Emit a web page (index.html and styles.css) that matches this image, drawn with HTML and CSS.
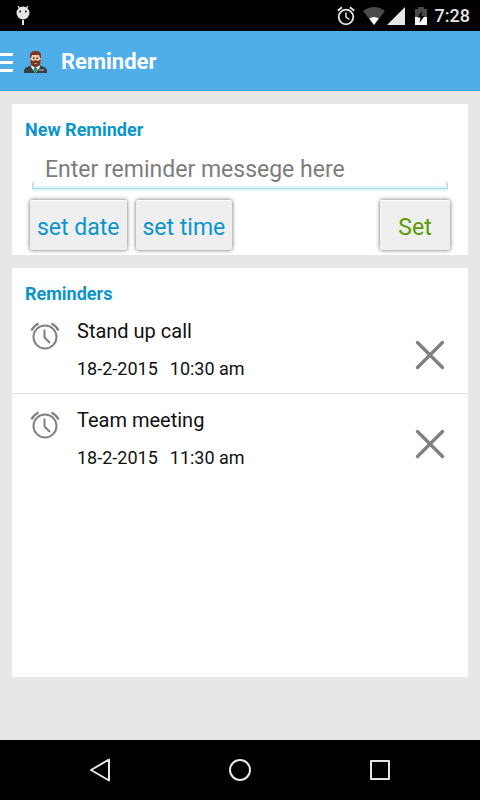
FILE: index.html
```html
<!DOCTYPE html>
<html lang="en">
<head>
    <meta charset="UTF-8">
    <meta name="viewport" content="width=device-width, initial-scale=1.0">
    <title>Reminder</title>
    <link rel="stylesheet" href="styles.css">
</head>
<body>
    <!-- Shared icons -->
    <svg class="icon-defs" aria-hidden="true">
        <symbol id="icon-alarm" viewBox="0 0 30 30">
            <g fill="none" stroke="currentColor">
                <circle cx="15" cy="16" r="11.500" stroke-width="2"/>
                <path d="M14.500 8.500v8l5.500 5.500" stroke-width="2"/>
                <path d="M1.500 9.500Q3.500 5 8.500 2.500M28.500 9.500Q26.500 5 21.500 2.500" stroke-width="2.200"/>
            </g>
        </symbol>
        <symbol id="icon-close" viewBox="0 0 30 30">
            <path d="M2.500 2.500l25 25M27.500 2.500l-25 25" fill="none" stroke="currentColor" stroke-width="3.400" stroke-linecap="round"/>
        </symbol>
    </svg>

    <div class="status-bar">
        <svg class="status-debug" width="14" height="21" viewBox="0 0 14 21">
            <circle cx="7" cy="8" r="6.500" fill="#e6e6e6"/>
            <path d="M2 1l2 3M12 1l-2 3" stroke="#e6e6e6" stroke-width="1.300"/>
            <path d="M6 15h2v5H6z" fill="#e6e6e6"/>
            <circle cx="4.200" cy="6.500" r=".9" fill="#000"/>
            <circle cx="9.800" cy="6.500" r=".9" fill="#000"/>
        </svg>
        <div class="status-icons">
            <svg width="18" height="20" viewBox="0 0 18 20">
                <g fill="none" stroke="#e6e6e6">
                    <circle cx="9" cy="11" r="7.300" stroke-width="1.800"/>
                    <path d="M9 6.500V11l3.500 2.500" stroke-width="1.500"/>
                    <path d="M.7 4.800L5 1.200M17.300 4.800L13 1.200" stroke-width="1.800"/>
                </g>
            </svg>
            <svg width="22" height="18" viewBox="0 0 22 18">
                <path d="M0 4Q11-4 22 4L11 18z" fill="#4a4a4a"/>
                <path d="M6.200 11.500Q11 8.500 15.800 11.500L11 18z" fill="#fff"/>
            </svg>
            <svg width="18" height="18" viewBox="0 0 18 18">
                <path d="M18 0v18H0z" fill="#e6e6e6"/>
            </svg>
            <svg class="status-battery" width="12" height="18" viewBox="0 0 12 18">
                <path d="M0 2h3V0h6v2h3v8H0z" fill="#4a4a4a"/>
                <path d="M0 10h12v8H0z" fill="#fff"/>
                <path d="M7 4L2.500 10.500h3L4.500 16l5-7H6.500z" fill="#000"/>
            </svg>
            <span class="clock">7:28</span>
        </div>
    </div>

    <header class="app-bar">
        <button class="menu-button" type="button" aria-label="Menu">
            <svg width="13" height="19" viewBox="0 0 13 19">
                <path d="M0 0h13v3H0zM0 8h13v3H0zM0 16h13v3H0z" fill="#fff"/>
            </svg>
        </button>
        <svg class="avatar" width="23" height="22" viewBox="0 0 23 22">
            <path d="M0 22v-2Q0 17 3 16l5-2h7l5 2q3 1 3 4v2z" fill="#3b3d40"/>
            <path d="M8 13h7l1 3-4.500 6L7 16z" fill="#fff"/>
            <path d="M10.500 16h2l1 3-2 3-2-3z" fill="#149a72"/>
            <path d="M6 6h11v3h-1.500v3h-8V9H6z" fill="#e8b28d"/>
            <path d="M7 3h9v9q-1 3-4.500 3T7 12z" fill="#f7cba8"/>
            <path d="M6 7V3q1-3 6-3 5 0 5 4v3h-1l-1-3H8L7 7z" fill="#7b3520"/>
            <path d="M6.500 8l2 2q3-1.500 6 0l2-2v3q0 5-5 5t-5-5z" fill="#7b3520"/>
            <path d="M10 12h3q-1.500 1.500-3 0z" fill="#fff"/>
            <path d="M9 6.500h1.500V8H9zM12.500 6.500H14V8h-1.500z" fill="#3b2520"/>
            <path d="M15 18.500h5v1h-5z" fill="#c8cccf"/>
        </svg>
        <h1>Reminder</h1>
    </header>

    <main>
        <form class="card new-reminder">
            <h2><label for="message">New Reminder</label></h2>
            <input class="message" id="message" type="text" placeholder="Enter reminder messege here">
            <div class="actions">
                <button class="btn" type="button">set date</button>
                <button class="btn" type="button">set time</button>
                <button class="btn btn-set" type="button">Set</button>
            </div>
        </form>

        <section class="card reminders">
            <h2>Reminders</h2>
            <ul>
                <li class="reminder">
                    <svg class="alarm"><use href="#icon-alarm"/></svg>
                    <div class="details">
                        <h3>Stand up call</h3>
                        <p><span>18-2-2015</span><span>10:30 am</span></p>
                    </div>
                    <button class="delete" type="button" aria-label="Delete Stand up call">
                        <svg><use href="#icon-close"/></svg>
                    </button>
                </li>
                <li class="reminder">
                    <svg class="alarm"><use href="#icon-alarm"/></svg>
                    <div class="details">
                        <h3>Team meeting</h3>
                        <p><span>18-2-2015</span><span>11:30 am</span></p>
                    </div>
                    <button class="delete" type="button" aria-label="Delete Team meeting">
                        <svg><use href="#icon-close"/></svg>
                    </button>
                </li>
            </ul>
        </section>
    </main>

    <nav class="nav-bar">
        <button type="button" aria-label="Back">
            <svg width="24" height="24" viewBox="0 0 24 24"><path d="M21 1.500v21L3 12z"/></svg>
        </button>
        <button type="button" aria-label="Home">
            <svg width="24" height="24" viewBox="0 0 24 24"><circle cx="12" cy="12" r="10"/></svg>
        </button>
        <button type="button" aria-label="Recent apps">
            <svg width="24" height="24" viewBox="0 0 24 24"><path d="M3 3h18v18H3z"/></svg>
        </button>
    </nav>
</body>
</html>
```

FILE: styles.css
```css
* {
    box-sizing: border-box;
}
body {
    margin: 0;
    min-height: 100vh;
    display: flex;
    flex-direction: column;
    font-family: Roboto, "Liberation Sans", sans-serif;
    background-color: #e7e7e7;
    color: #111;
}
h1, h2, h3, p, ul {
    margin: 0;
    padding: 0;
}
button {
    border: none;
    padding: 0;
    background: none;
    font-family: inherit;
}
svg {
    display: block;
}
.icon-defs {
    position: absolute;
    width: 0;
    height: 0;
}
.status-bar {
    height: 31px;
    padding: 0 10px 0 16px;
    display: flex;
    align-items: center;
    justify-content: space-between;
    background-color: #000;
}
.status-icons {
    display: flex;
    align-items: center;
    gap: 8px;
}
.status-icons svg:nth-child(3) {
    margin-left: -6px;
}
.status-battery {
    margin-left: 2px;
}
.clock {
    font-size: 18px;
    font-weight: 500;
    line-height: 24px;
    color: #e6e6e6;
}
.app-bar {
    height: 60px;
    padding-top: 3px;
    display: flex;
    align-items: center;
    background-color: #4fadea;
    border-bottom: 1px solid #48a0d8;
}
.avatar {
    margin: 0 14px 0 11px;
}
.app-bar h1 {
    font-size: 22px;
    font-weight: 700;
    line-height: 28px;
    color: #fff;
}
main {
    flex: 1;
    padding: 13px 12px 63px;
    display: flex;
    flex-direction: column;
    gap: 13px;
}
.card {
    background-color: #fff;
}
.card h2 {
    padding: 15px 13px 0;
    font-size: 18px;
    font-weight: 700;
    line-height: 22px;
    color: #0a95cc;
}
.new-reminder {
    padding-bottom: 5px;
}

/* Text box with the underline turned up at both ends */
.message {
    display: block;
    width: calc(100% - 40px);
    height: 42px;
    margin: 6px 20px 0;
    padding: 2px 13px 0;
    border: none;
    outline: none;
    font-family: inherit;
    font-size: 23px;
    color: #111;
    background:
        linear-gradient(#a5d8ea, #a5d8ea) 0 100% / 100% 1px no-repeat,
        linear-gradient(#a5d8ea, #a5d8ea) 0 100% / 1px 6px no-repeat,
        linear-gradient(#a5d8ea, #a5d8ea) 100% 100% / 1px 6px no-repeat,
        linear-gradient(#e4f4fa, #e4f4fa) 0 100% / 100% 3px no-repeat,
        linear-gradient(#e4f4fa, #e4f4fa) 0 100% / 3px 8px no-repeat,
        linear-gradient(#e4f4fa, #e4f4fa) 100% 100% / 3px 8px no-repeat;
    box-shadow: 0 2px 1px #e4f4fa;
}
.message::placeholder {
    color: #7d7d7d;
    opacity: 1;
}
.actions {
    display: flex;
    gap: 9px;
    padding: 11px 18px 0;
}
.btn {
    height: 50px;
    padding: 5px 7px 0;
    border-radius: 2px;
    border-top: 1px solid #fff;
    background-color: #efefef;
    box-shadow: 0 0 4px rgba(0,0,0,0.6);
    font-size: 23px;
    line-height: 28px;
    color: #0a95cc;
}
.btn-set {
    min-width: 70px;
    margin-left: auto;
    color: #5b9a00;
}
.reminders {
    flex: 1;
}
.reminders ul {
    list-style: none;
}
.reminder {
    height: 88px;
    padding: 0 23px 0 18px;
    display: flex;
    align-items: flex-start;
}
.reminder + .reminder {
    height: 89px;
    border-top: 1px solid #e0e0e0;
}
.alarm {
    width: 30px;
    height: 30px;
    margin: 16px 17px 0 0;
    color: #808080;
}
.details {
    flex: 1;
    padding-top: 13px;
}
.details h3 {
    font-size: 20px;
    font-weight: 400;
    line-height: 26px;
}
.details p {
    display: flex;
    gap: 12px;
    margin-top: 14px;
    font-size: 18px;
    line-height: 22px;
}
.delete {
    margin-top: 35px;
    color: #808080;
}
.delete svg {
    width: 30px;
    height: 30px;
}
.nav-bar {
    height: 60px;
    padding: 0 30px;
    display: flex;
    align-items: center;
    background-color: #000;
}
.nav-bar button {
    flex: 1;
    display: flex;
    justify-content: center;
}
.nav-bar svg {
    fill: none;
    stroke: #e6e6e6;
    stroke-width: 2;
    stroke-linejoin: round;
}
```
